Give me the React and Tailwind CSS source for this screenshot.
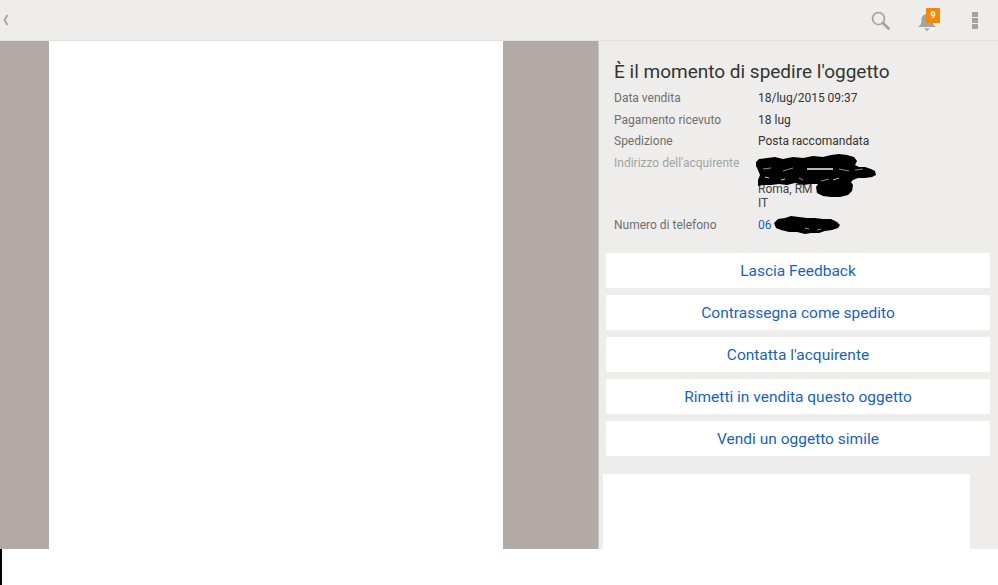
const rows = [
  { label: 'Data vendita', value: '18/lug/2015 09:37' },
  { label: 'Pagamento ricevuto', value: '18 lug' },
  { label: 'Spedizione', value: 'Posta raccomandata' },
]

const actions = [
  'Lascia Feedback',
  'Contrassegna come spedito',
  "Contatta l'acquirente",
  'Rimetti in vendita questo oggetto',
  'Vendi un oggetto simile',
]

function AddressScribble() {
  return (
    <svg width="124" height="46" viewBox="0 0 124 46" className="absolute left-[-3px] top-[1px]">
      <path
        d="M1 8 L4 5 L12 4 L20 3 L28 5 L38 3 L48 4 L58 2 L68 3 L76 1 L84 0 L92 1 L99 3 L102 7 L100 11 L104 13 L110 13 L116 15 L120 17 L121 21 L117 23 L110 24 L103 24 L98 26 L96 28 L98 31 L97 37 L93 41 L85 43 L76 43 L68 42 L62 39 L61 33 L63 30 L56 30 L48 31 L40 29 L32 31 L24 30 L16 31 L8 31 L3 32 L3 26 L5 21 L3 16 L1 12 Z"
        fill="#000"
      />
      <path d="M52 15 H78" stroke="#f4f4f4" strokeWidth="1.500" />
      <path d="M8 15 L16 14 M28 17 L38 14 M84 15 L94 17 M66 27 L74 25 M44 24 L48 26 M100 16 L108 15" stroke="#8d8d8d" strokeWidth="1" />
      <path d="M10 23 L14 24 M26 26 L30 25 M78 26 L84 24" stroke="#c9c9c9" strokeWidth="1" />
    </svg>
  )
}

function PhoneScribble() {
  return (
    <svg width="68" height="20" viewBox="0 0 68 20" className="absolute left-[15px] top-[-2px]">
      <path
        d="M1 7 L5 3 L12 2 L18 0 L26 1 L34 2 L42 2 L50 3 L58 3 L64 6 L67 9 L65 12 L59 14 L52 15 L46 17 L38 17 L32 18 L24 16 L16 16 L8 14 L3 12 Z"
        fill="#000"
      />
      <path d="M32 12 L36 13 M44 14 L48 13" stroke="#9a9a9a" strokeWidth="1" />
    </svg>
  )
}

function TopBar() {
  return (
    <div className="flex h-[41px] shrink-0 items-center justify-between border-b border-[#e2e1df] bg-[#eeedeb]">
      <svg width="8" height="12" viewBox="0 0 8 12" className="ml-[2px]">
        <path d="M5.500 1 L2.500 6 L5.500 11" fill="none" stroke="#a9a9a9" strokeWidth="2" />
      </svg>
      <div className="flex items-center">
        <svg width="19" height="19" viewBox="0 0 19 19" className="mr-[28px]">
          <circle cx="7.500" cy="7.500" r="6" fill="none" stroke="#a3a3a3" strokeWidth="1.700" />
          <path d="M12 12 L17.500 17.500" stroke="#a3a3a3" strokeWidth="2.800" strokeLinecap="round" />
        </svg>
        <div className="relative mr-[34px] h-[24px] w-[20px]">
          <svg width="18" height="20" viewBox="0 0 18 20" className="absolute left-0 top-[4px]">
            <path d="M0 15 C3 13 3.500 11 3.500 8 C3.500 4 6 2 9 2 C12 2 14.500 4 14.500 8 C14.500 11 15 13 18 15 Z" fill="#a3a3a3" />
            <path d="M6 16.500 H12 L9 19 Z" fill="#a3a3a3" />
          </svg>
          <span className="absolute left-[8px] top-0 flex h-[15px] w-[14px] items-center justify-center rounded-[1px] bg-[#f18a0c] text-[9px] font-bold text-[#fff]">
            9
          </span>
        </div>
        <div className="mr-[20px] flex flex-col gap-[1px]">
          <span className="h-[5px] w-[6px] bg-[#a3a3a3]" />
          <span className="h-[5px] w-[6px] bg-[#a3a3a3]" />
          <span className="h-[5px] w-[6px] bg-[#a3a3a3]" />
        </div>
      </div>
    </div>
  )
}

function OrderDetails() {
  return (
    <div className="pl-[15px] pt-[20px]">
      <h1 className="text-[19px] font-normal leading-[21px] text-[#333]">È il momento di spedire l'oggetto</h1>
      <div className="mt-[6px] text-[12px] leading-[21.5px]">
        {rows.map(r => (
          <div key={r.label} className="flex">
            <span className="w-[144px] text-[#6f6f6f]">{r.label}</span>
            <span className="text-[#333]">{r.value}</span>
          </div>
        ))}
        <div className="flex">
          <span className="w-[144px] text-[#a3a3a3]">Indirizzo dell'acquirente</span>
          <div className="relative h-[58px] w-[130px] pt-[29px] leading-[14px] text-[#444]">
            <div>Roma, RM</div>
            <div>IT</div>
            <AddressScribble />
          </div>
        </div>
        <div className="flex pt-[7px] leading-[14px]">
          <span className="w-[144px] text-[#6f6f6f]">Numero di telefono</span>
          <div className="relative text-[#1a5fc4]">
            06
            <PhoneScribble />
          </div>
        </div>
      </div>
    </div>
  )
}

export default function App() {
  return (
    <div className="flex h-[585px] flex-col overflow-hidden bg-[#fff] font-['Roboto',sans-serif]">
      <div className="flex h-[549px] shrink-0 flex-col overflow-hidden">
        <TopBar />
        <div className="flex min-h-0 flex-1">
          <div className="flex w-[598px] shrink-0 bg-[#b3aaa7] pl-[49px]">
            <div className="h-full w-[454px] bg-[#fff]" />
          </div>
          <div className="min-w-0 flex-1 overflow-hidden border-l border-[#c9c5c2] bg-[#eeedeb]">
            <OrderDetails />
            <div className="mt-[21px] flex flex-col gap-[7px] pl-[7px] pr-[8px]">
              {actions.map(a => (
                <button key={a} className="h-[35px] bg-[#fff] pt-[3px] text-center text-[15.5px] text-[#1a5fc4]">
                  {a}
                </button>
              ))}
            </div>
            <div className="ml-[4px] mt-[18px] h-[100px] w-[367px] bg-[#fff]" />
          </div>
        </div>
      </div>
      <div className="h-[36px] w-[2px] bg-[#000]" />
    </div>
  )
}
